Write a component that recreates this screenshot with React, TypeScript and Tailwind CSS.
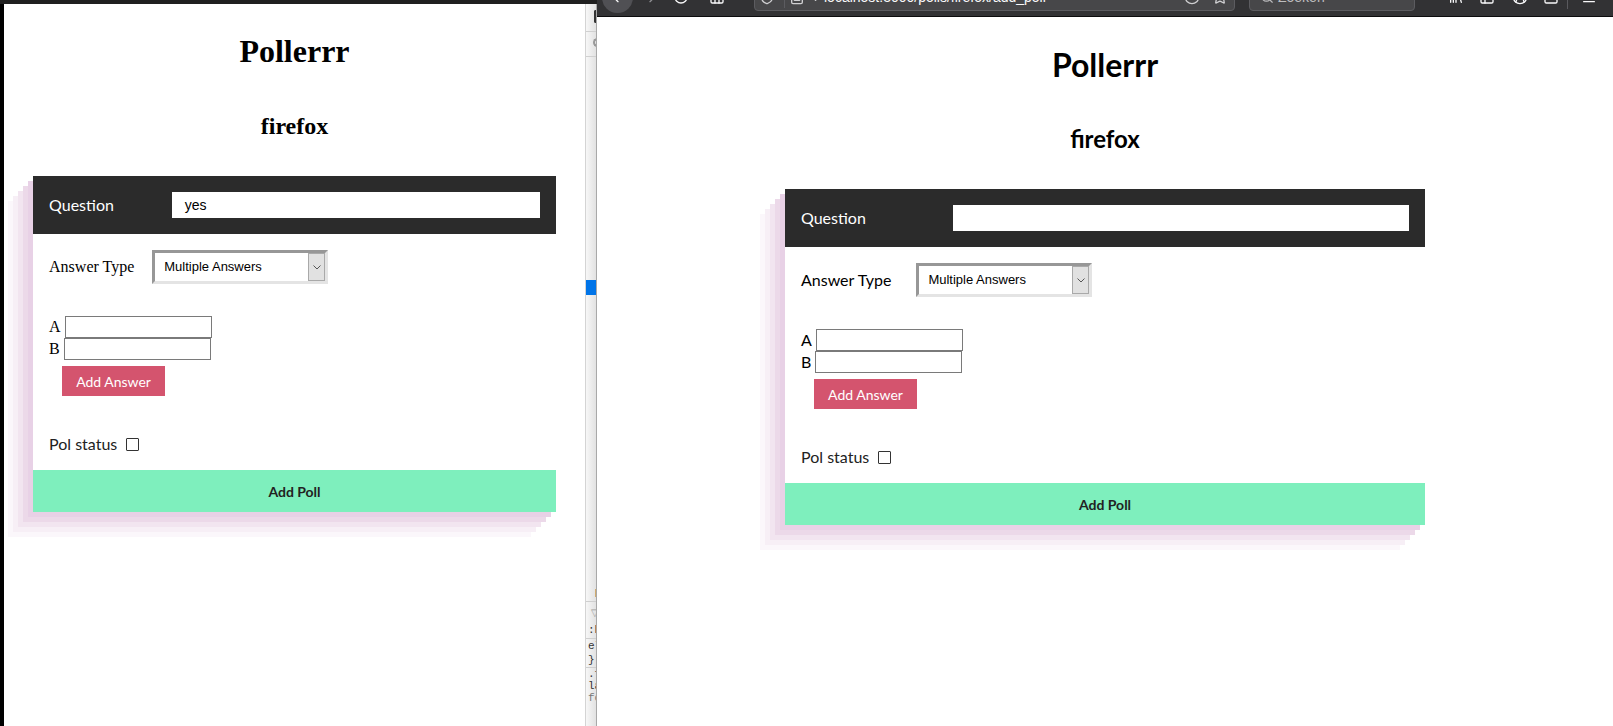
import {
  ArrowLeft,
  ArrowRight,
  RotateCw,
  Home,
  Shield,
  FileText,
  ChevronLeft,
  Star,
  Search,
  Library,
  PanelLeft,
  CircleUserRound,
  Download,
  Menu,
  Circle,
} from "lucide-react";

interface PollPageProps {
  serif: boolean;
  question: string;
}

function FakeSelect({ gap }: { gap: string }) {
  return (
    <div className={`${gap} flex h-[34px] w-[176px] border-[3px] border-t-[#979797] border-l-[#979797] border-r-[#e4e4e4] border-b-[#e4e4e4] bg-white`}>
      <div className="flex flex-1 items-center pl-[9px] font-['Liberation_Sans',sans-serif] text-[13px] text-black">
        Multiple Answers
      </div>
      <div className="flex w-[17px] items-center justify-center border border-[#a9a9a9] bg-[#e1e1e1]">
        <svg width="8" height="5" viewBox="0 0 8 5" fill="none">
          <path d="M0.5 0.5 L4 4 L7.5 0.5" stroke="#555" strokeWidth="1" />
        </svg>
      </div>
    </div>
  );
}

function PollPage({ serif, question }: PollPageProps) {
  const heading = serif ? "font-['Liberation_Serif',serif]" : "font-['Lato',sans-serif]";
  const label = serif
    ? "font-['Liberation_Serif',serif] text-[16px] text-black"
    : "font-['Lato',sans-serif] text-[16px] text-black";

  return (
    <div className="flex flex-col items-center">
      <h1 className={`${heading} mt-[29px] text-[32px] font-bold leading-[37px] text-black`}>Pollerrr</h1>
      <h2 className={`${heading} mt-[42px] text-[24px] font-bold leading-[28px] text-black`}>firefox</h2>

      <div className="mt-[36px] w-[90%] max-w-[640px] bg-white shadow-[-5px_5px_0_#e8d1e6,-10px_10px_0_#ecd9e9,-15px_15px_0_#f2e5f0,-20px_20px_0_#f7eff6,-25px_25px_0_#fbf7fb]">
        {/* Question header */}
        <div className="flex h-[58px] items-center bg-[#2b2b2b] px-4">
          <div className="w-1/4 font-['Lato',sans-serif] text-[16px] text-white">Question</div>
          <div className="flex h-[26px] w-3/4 items-center bg-white pl-[13px] font-['Liberation_Sans',sans-serif] text-[14px] text-black">
            {question}
          </div>
        </div>

        <div className="px-4">
          <div className="mt-4 flex h-[34px] items-center">
            <span className={label}>Answer Type</span>
            <FakeSelect gap={serif ? "ml-[18px]" : "ml-[25px]"} />
          </div>

          <div className="mt-[32px] flex flex-col">
            {["A", "B"].map((l) => (
              <div key={l} className="flex h-[22px] items-center">
                <span className={`${label} leading-[22px]`}>{l}</span>
                <div className="ml-[4px] h-[22px] w-[147px] border border-[#7a7a7a] bg-white" />
              </div>
            ))}
          </div>

          <button className="ml-[13px] mt-[6px] flex h-[30px] w-[103px] items-center justify-center bg-[#d4546e] font-['Lato',sans-serif] text-[14px] text-white">
            Add Answer
          </button>

          <div className="mt-[36px] flex h-[24px] items-center">
            <span className="font-['Lato',sans-serif] text-[16px] text-[#222]">Pol status</span>
            <div className="ml-[9px] h-[13px] w-[13px] rounded-[1px] border border-[#333] bg-white" />
          </div>
        </div>

        <div className="mt-[14px] flex h-[42px] items-center justify-center bg-[#7eefbd] font-['Lato',sans-serif] text-[14px] font-bold text-[#222]">
          Add Poll
        </div>
      </div>
    </div>
  );
}

function DevtoolsStrip() {
  return (
    <div className="flex w-[12px] flex-col overflow-hidden border-l border-r border-l-[#d4d4d4] border-r-[#a8a8a8] bg-gradient-to-r from-[#f7f7f7] to-[#e2e2e2]">
      <div className="h-[6px]" />
      <div className="ml-[8px] h-[13px] w-[4px] rounded-l-[2px] border-2 border-r-0 border-[#333]" />
      <div className="h-[8px]" />
      <div className="h-px bg-[#d0d0d0]" />
      <div className="ml-[7px] mt-[6px] h-[9px] w-[6px] rounded-l-full border-2 border-r-0 border-[#999]" />
      <div className="mt-[9px] h-px bg-[#d0d0d0]" />
      <div className="h-[223px]" />
      <div className="h-[15px] bg-[#0074e8]" />
      <div className="h-[290px]" />
      <div className="h-[16px] pl-[9px] font-['Liberation_Sans',sans-serif] text-[11px] font-bold leading-[16px] text-[#333]">I</div>
      <div className="h-px bg-[#cfcfcf]" />
      <div className="h-[20px] pl-[5px] text-[10px] leading-[20px] text-[#999]">▽</div>
      <div className="h-[16px] pl-[2px] font-['Liberation_Mono',monospace] text-[11px] leading-[16px] text-[#333]">:h</div>
      <div className="h-px bg-[#cfcfcf]" />
      <div className="h-[14px] pl-[2px] font-['Liberation_Mono',monospace] text-[11px] leading-[14px] text-[#333]">el</div>
      <div className="h-[14px] pl-[2px] font-['Liberation_Mono',monospace] text-[11px] leading-[14px] text-[#333]">{"}"}</div>
      <div className="h-px bg-[#cfcfcf]" />
      <div className="h-[12px] pl-[2px] font-['Liberation_Mono',monospace] text-[11px] leading-[12px] text-[#333]">.f</div>
      <div className="h-[12px] pl-[2px] font-['Liberation_Mono',monospace] text-[11px] leading-[12px] text-[#333]">la</div>
      <div className="h-[12px] pl-[2px] font-['Liberation_Mono',monospace] text-[11px] leading-[12px] text-[#777]">fo</div>
    </div>
  );
}

function Toolbar() {
  return (
    <div className="h-[17px] overflow-hidden border-b border-[#0c0c0d] bg-[#323234]">
      <div className="mt-[-22px] flex h-[38px] items-center font-['Liberation_Sans',sans-serif] text-[#f9f9fa]">
        <div className="ml-[5px] flex h-[31px] w-[31px] items-center justify-center rounded-full bg-[#505054]">
          <ArrowLeft size={16} />
        </div>
        <ArrowRight className="ml-[9px] text-[#8f8f93]" size={16} />
        <RotateCw className="ml-[15px]" size={16} />
        <Home className="ml-[20px]" size={16} />
        <div className="ml-[29px] flex h-[28px] w-[481px] items-center rounded-[4px] border border-[#5c5c60] bg-[#474749]">
          <Shield className="ml-[4px] text-[#cfcfd1]" size={16} />
          <div className="ml-[9px] h-[22px] w-px bg-[#5c5c60]" />
          <FileText className="ml-[4px] text-[#cfcfd1]" size={16} />
          <ChevronLeft className="ml-[2px] text-[#cfcfd1]" size={14} />
          <span className="ml-[3px] text-[14px]">localhost:3000/polls/firefox/add_poll</span>
          <div className="flex-1" />
          <Circle className="text-[#cfcfd1]" size={16} />
          <Star className="ml-[12px] mr-[6px] text-[#cfcfd1]" size={16} />
        </div>
        <div className="ml-[14px] flex h-[28px] w-[166px] items-center rounded-[4px] border border-[#5c5c60] bg-[#474749]">
          <Search className="ml-[10px] text-[#bdbdbf]" size={14} />
          <span className="ml-[4px] text-[14px] text-[#bdbdbf]">Zoeken</span>
        </div>
        <Library className="ml-[33px]" size={16} />
        <PanelLeft className="ml-[15px]" size={16} />
        <CircleUserRound className="ml-[17px]" size={16} />
        <Download className="ml-[15px]" size={16} />
        <div className="ml-[8px] h-[24px] w-px bg-[#5a5a5e]" />
        <Menu className="ml-[13px]" size={16} />
      </div>
    </div>
  );
}

export default function App() {
  return (
    <div className="flex h-[726px] w-[1613px] overflow-hidden bg-white">
      <div className="flex w-[597px] flex-col">
        <div className="h-[4px] bg-[#1f1f1f]" />
        <div className="flex flex-1">
          <div className="w-[4px] bg-black" />
          <div className="w-[581px]">
            <PollPage serif question="yes" />
          </div>
          <DevtoolsStrip />
        </div>
      </div>
      <div className="flex w-[1016px] flex-col">
        <Toolbar />
        <PollPage serif={false} question="" />
      </div>
    </div>
  );
}
